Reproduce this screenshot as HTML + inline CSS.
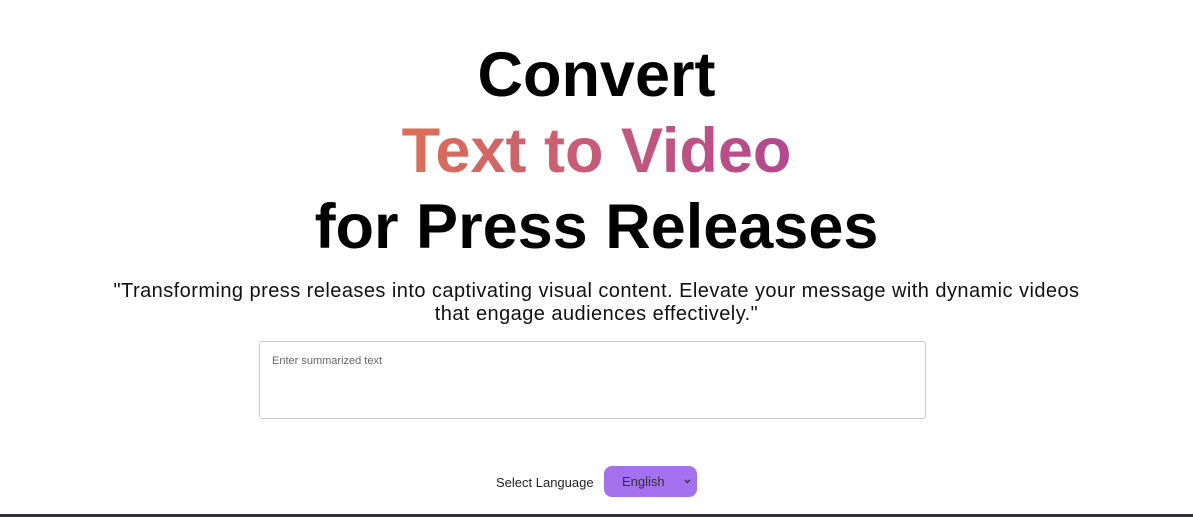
<!DOCTYPE html>
<html><head><style>
body{margin:0;width:1193px;height:517px;background:#fff;font-family:"Liberation Sans",sans-serif;position:relative;overflow:hidden}
h1{margin:0;position:absolute;top:37px;left:0;width:1193px;text-align:center;font-size:63px;line-height:76px;font-weight:bold;color:#000}
.g{background:linear-gradient(90deg,#dc6f55,#c85a77 50%,#b4478f);-webkit-background-clip:text;background-clip:text;color:transparent}
p{position:absolute;top:280px;left:0;width:1193px;text-align:center;margin:0;font-size:20px;letter-spacing:0.45px;line-height:23px;color:#111}
.ta{position:absolute;left:259px;top:341px;width:665px;height:76px;border:1px solid #c9c9c9;border-radius:3px}
.ta span{position:absolute;left:12px;top:13px;font-size:11px;color:#666}
.sl{position:absolute;left:496px;top:475px;font-size:13px;color:#222}
.sel{position:absolute;left:604px;top:466px;width:93px;height:31px;border-radius:8px;background:#a370ee;font-size:13px;color:#333}
.sel span{position:absolute;left:18px;top:8px}
.sel svg{position:absolute;right:6px;top:13px}
.bar{position:absolute;left:0;top:514px;width:1193px;height:3px;background:#2b333d}
</style></head><body>
<h1>Convert<br><span class="g">Text to Video</span><br>for Press Releases</h1>
<p>"Transforming press releases into captivating visual content. Elevate your message with dynamic videos<br>that engage audiences effectively."</p>
<div class="ta"><span>Enter summarized text</span></div>
<div class="sl">Select Language</div>
<div class="sel"><span>English</span><svg width="7" height="5" viewBox="0 0 7 5"><path d="M1 1l2.5 2.5L6 1" stroke="#333" stroke-width="1.3" fill="none"/></svg></div>
<div class="bar"></div>
</body></html>
